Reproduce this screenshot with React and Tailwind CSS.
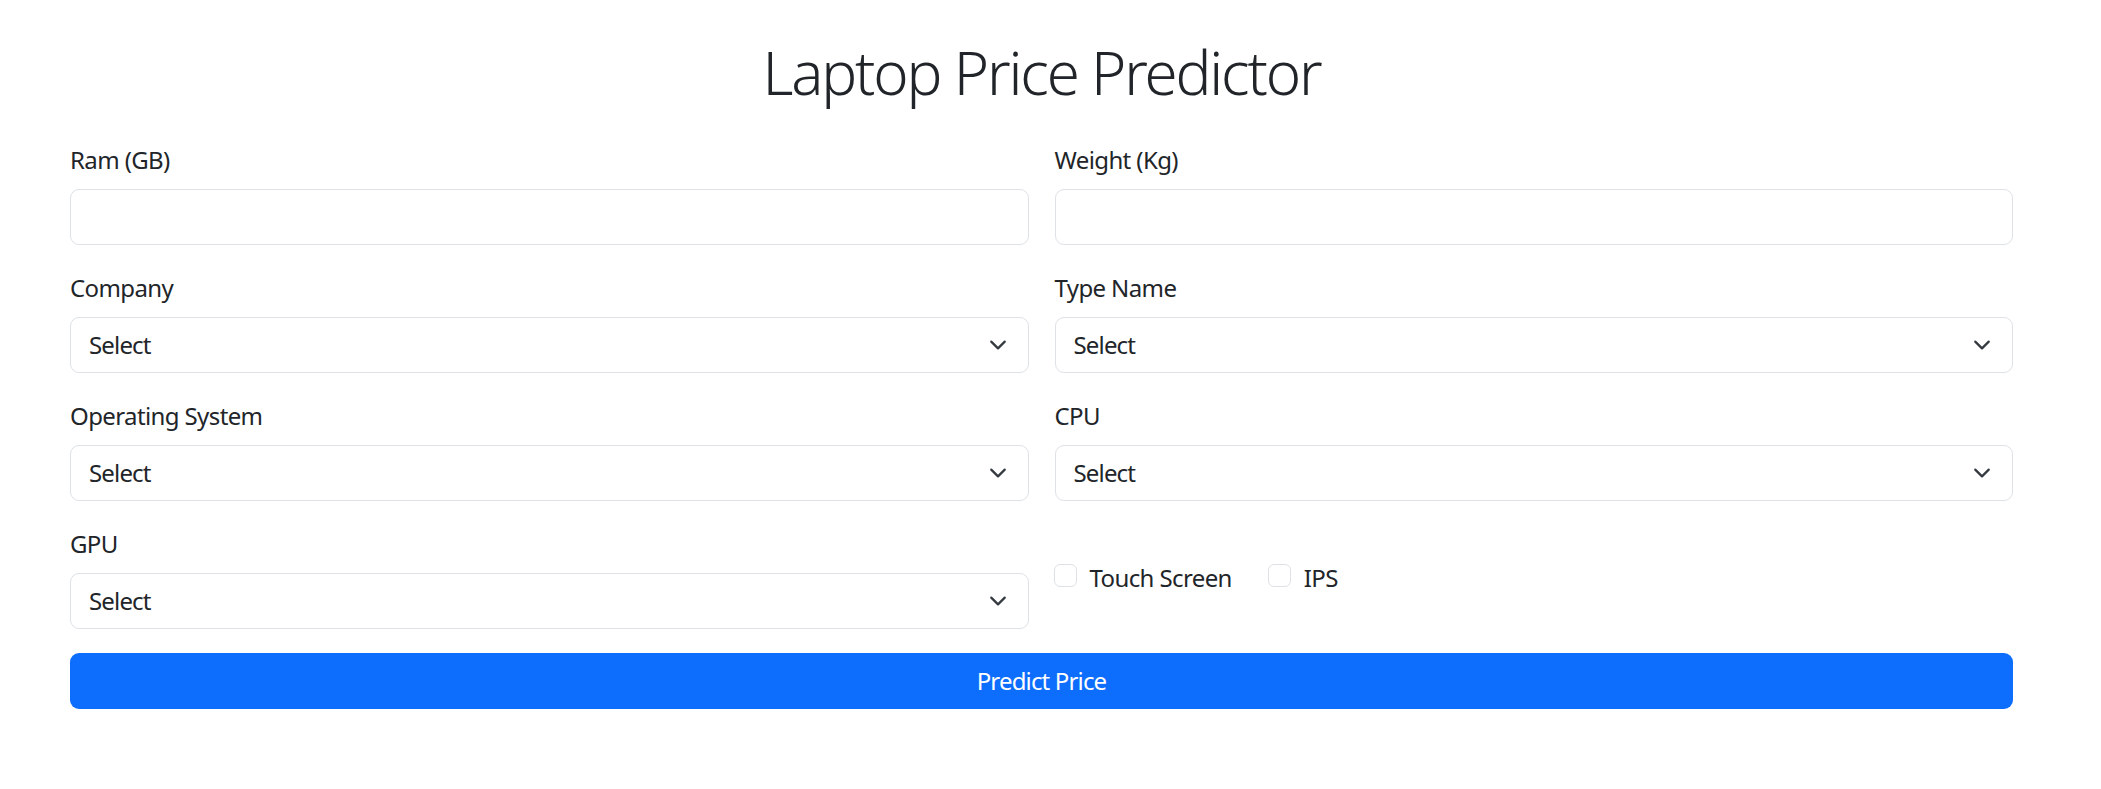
import React from "react";

function Chevron() {
  return (
    <svg
      className="pointer-events-none absolute right-[19px] top-1/2 -translate-y-1/2"
      width="24"
      height="18"
      viewBox="0 0 16 16"
      fill="none"
    >
      <path d="m2 5 6 6 6-6" stroke="#343a40" strokeWidth="2" strokeLinecap="round" strokeLinejoin="round" />
    </svg>
  );
}

function Label({ children }) {
  return <label className="block h-[36px] pt-[1px] text-[24px] leading-[36px] mb-[12px]">{children}</label>;
}

function TextField({ label }) {
  return (
    <div className="mb-[24px]">
      <Label>{label}</Label>
      <input
        type="text"
        className="block w-full h-[56px] rounded-[9px] border border-[#dee2e6] bg-white px-[18px] text-[24px] text-[#212529] outline-none"
      />
    </div>
  );
}

function SelectField({ label }) {
  return (
    <div className="mb-[24px]">
      <Label>{label}</Label>
      <div className="relative">
        <select className="block w-full h-[56px] appearance-none rounded-[9px] border border-[#dee2e6] bg-white pl-[18px] pr-[54px] text-[24px] tracking-[-0.035em] text-[#212529] outline-none">
          <option>Select</option>
        </select>
        <Chevron />
      </div>
    </div>
  );
}

function Check({ label, className }) {
  return (
    <div className={"flex items-start " + (className || "")}>
      <input
        type="checkbox"
        className="mt-[5px] h-[23px] w-[23px] shrink-0 appearance-none rounded-[6px] border border-[#dee2e6] bg-white"
      />
      <span className="ml-[13px] pt-[1px] text-[24px] leading-[36px]">{label}</span>
    </div>
  );
}

export default function App() {
  return (
    <div className="min-h-[789px] bg-white text-[#212529] tracking-[-0.038em] font-['Segoe_UI','Noto_Sans','Open_Sans',sans-serif]">
      <div className="pl-[70px] pr-[88px] pt-[36px]">
        <h1 className="text-center text-[60px] leading-[72px] font-light tracking-[-0.036em]">Laptop Price Predictor</h1>
        <div className="mt-[33px] grid grid-cols-2 gap-x-[26px]">
          <TextField label="Ram (GB)" />
          <TextField label="Weight (Kg)" />
          <SelectField label="Company" />
          <SelectField label="Type Name" />
          <SelectField label="Operating System" />
          <SelectField label="CPU" />
          <SelectField label="GPU" />
          <div className="pt-[34px] flex items-start -ml-[1px]">
            <Check label="Touch Screen" />
            <Check label="IPS" className="ml-[36px]" />
          </div>
        </div>
        <button
          type="button"
          className="block w-full h-[56px] rounded-[9px] bg-[#0d6efd] text-[24px] tracking-[-0.035em] text-white"
        >
          Predict Price
        </button>
      </div>
    </div>
  );
}
